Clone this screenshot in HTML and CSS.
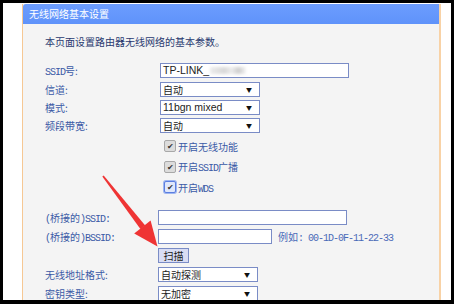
FILE: index.html
```html
<!DOCTYPE html>
<html lang="zh-CN">
<head>
<meta charset="utf-8">
<title>无线网络基本设置</title>
<link rel="stylesheet" href="styles.css">
</head>
<body>
<div class="screen">
  <div class="panel">
    <div class="head">无线网络基本设置</div>
    <div class="body">
      <p class="desc">本页面设置路由器无线网络的基本参数。</p>
      <div class="group top">
        <div class="row r1"><span class="lbl"><span class="lat">SSID</span>号:</span><div class="field wide"><span class="arial">TP-LINK_</span><span class="blur"></span></div></div>
        <div class="row"><span class="lbl">信道:</span><div class="field sel">自动<span class="arr">▼</span></div></div>
        <div class="row"><span class="lbl">模式:</span><div class="field sel"><span class="arial">11bgn mixed</span><span class="arr">▼</span></div></div>
        <div class="row"><span class="lbl">频段带宽:</span><div class="field sel">自动<span class="arr">▼</span></div></div>
        <div class="chk c1"><span class="box">✔</span><span class="ctext">开启无线功能</span></div>
        <div class="chk c2"><span class="box">✔</span><span class="ctext">开启<span class="lat">SSID</span>广播</span></div>
        <div class="chk c3"><span class="box focus">✔</span><span class="ctext">开启<span class="lat">WDS</span></span></div>
      </div>
      <div class="group bottom">
        <div class="row"><span class="lbl"><span class="lat">(</span>桥接的<span class="lat">)SSID:</span></span><div class="field wide2"></div></div>
        <div class="row"><span class="lbl"><span class="lat">(</span>桥接的<span class="lat">)BSSID:</span></span><div class="field mid"></div><span class="hint">例如<span class="lat">: 00-1D-0F-11-22-33</span></span></div>
        <div class="row"><span class="lbl"></span><div class="btn">扫描</div></div>
        <div class="row"><span class="lbl">无线地址格式:</span><div class="field sel">自动探测<span class="arr">▼</span></div></div>
        <div class="row"><span class="lbl">密钥类型:</span><div class="field sel">无加密<span class="arr">▼</span></div></div>
      </div>
    </div>
  </div>
</div>
<svg class="arrow" width="454" height="304" viewBox="0 0 454 304">
  <polygon points="102.3,176.5 103.7,175.5 145.2,225.4 140.4,229.0" fill="#ef3434"/>
  <polygon points="157.5,246.5 134.2,233.4 150.6,220.6" fill="#ef3434"/>
</svg>
</body>
</html>
```
FILE: styles.css
```css
html, body {
  margin: 0;
  padding: 0;
}
body {
  background: #000;
  width: 454px;
  height: 304px;
  position: relative;
  overflow: hidden;
  padding: 3px 3px 0 3px;
  box-sizing: border-box;
  font-family: "Noto Sans CJK SC", "Liberation Sans", sans-serif;
  font-size: 10px;
}
.screen {
  background: #fff;
  width: 448px;
  height: 297px;
  overflow: hidden;
  padding: 1px 0 0 19px;
  box-sizing: border-box;
}
.panel {
  width: 419px;
  height: 300px;
  box-sizing: border-box;
  border-left: 1px solid #f6c894;
  border-right: 2px solid #f8d2a6;
  background: #f4f4f4;
}
.head {
  height: 20px;
  line-height: 20px;
  background: linear-gradient(#6c9dfe, #5f93fa);
  color: #fff;
  padding-left: 6px;
  border-top-left-radius: 3px;
  font-size: 10px;
}
.body {
  padding: 12px 0 0 22px;
}
.desc {
  margin: 0;
  height: 12px;
  line-height: 12px;
  color: #2a3a70;
}
.lat {
  font-family: "Liberation Mono", monospace;
  letter-spacing: -1px;
}
.arial {
  font-family: "Liberation Sans", Arial, sans-serif;
  font-size: 10.5px;
}
.group.top {
  margin-top: 15px;
}
.row {
  display: flex;
  align-items: center;
  height: 15px;
  margin-bottom: 3px;
}
.row.r1 {
  margin-bottom: 4px;
}
.lbl {
  width: 115px;
  flex: none;
  color: #3b5aa6;
  white-space: nowrap;
}
.bottom .lbl {
  width: 113px;
}
.field {
  height: 15px;
  box-sizing: border-box;
  border: 1px solid #7a8cc6;
  background: #fff;
  color: #222;
  display: flex;
  align-items: center;
  padding-left: 2px;
  position: relative;
  line-height: 13px;
}
.wide { width: 189px; }
.wide2 { width: 189px; }
.mid { width: 114px; }
.sel { width: 100px; }
.arr {
  position: absolute;
  right: 7px;
  top: 0;
  font-size: 6px;
  line-height: 13px;
  color: #111;
}
.blur {
  display: inline-block;
  width: 36px;
  height: 7px;
  margin-left: 1px;
  background: linear-gradient(90deg, #ececec, #d8d8d8 40%, #ececec 60%, #cdcdcd 80%, #f6f6f6);
  filter: blur(1.5px);
}
.chk {
  display: flex;
  align-items: center;
  padding-left: 119px;
  height: 20px;
}
.chk.c2 { height: 21px; }
.box {
  width: 10px;
  height: 10px;
  border: 1px solid #a8a8a8;
  background: #dcdcdc;
  border-radius: 2px;
  font-size: 8px;
  line-height: 10px;
  text-align: center;
  color: #333;
  margin-right: 2px;
}
.box.focus {
  border-color: #5b7ee0;
  background: #dfe7fb;
  box-shadow: 0 0 0 1px #9fb6f0;
}
.ctext {
  color: #3b5aa6;
}
.group.bottom {
  margin-top: 13px;
}
.bottom .row {
  height: 15px;
  margin-bottom: 4px;
}
.hint {
  margin-left: 6px;
  color: #4a6ab8;
}
.btn {
  width: 31px;
  height: 15px;
  box-sizing: border-box;
  border: 1px solid #7a8cc6;
  background: #d9ddf4;
  text-align: center;
  line-height: 13px;
  color: #222;
}
.arrow {
  position: absolute;
  left: 0;
  top: 0;
  pointer-events: none;
}
```
